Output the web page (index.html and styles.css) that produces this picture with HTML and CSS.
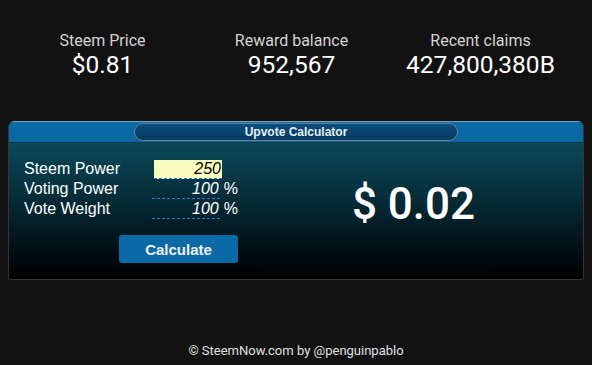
FILE: index.html
```html
<!DOCTYPE html>
<html lang="en">
<head>
    <meta charset="UTF-8">
    <meta name="viewport" content="width=device-width, initial-scale=1.0">
    <title>SteemNow - Upvote Calculator</title>
    <link rel="stylesheet" href="styles.css">
</head>
<body>
    <div class="stats">
        <div class="stat">
            <div class="stat-label">Steem Price</div>
            <div class="stat-value">$0.81</div>
        </div>
        <div class="stat">
            <div class="stat-label">Reward balance</div>
            <div class="stat-value">952,567</div>
        </div>
        <div class="stat">
            <div class="stat-label">Recent claims</div>
            <div class="stat-value">427,800,380B</div>
        </div>
    </div>

    <div class="panel">
        <div class="panel-head">
            <div class="panel-title">Upvote Calculator</div>
        </div>
        <div class="panel-body">
            <div class="calc-form">
                <div class="row">
                    <label for="sp">Steem Power</label>
                    <input id="sp" class="field field-edit" type="text" value="250">
                </div>
                <div class="row">
                    <label for="vp">Voting Power</label>
                    <input id="vp" class="field" type="text" value="100">
                    <span class="unit">%</span>
                </div>
                <div class="row">
                    <label for="vw">Vote Weight</label>
                    <input id="vw" class="field" type="text" value="100">
                    <span class="unit">%</span>
                </div>
                <button id="calcBtn" class="calc-btn">Calculate</button>
            </div>
            <div class="result" id="result">$ 0.02</div>
        </div>
    </div>

    <div class="footer">&copy; SteemNow.com by @penguinpablo</div>
</body>
</html>
```

FILE: styles.css
```css
body {
    margin: 8px;
    background: #121212;
    font-family: Roboto, 'Liberation Sans', sans-serif;
    color: #fff;
}

.stats {
    display: grid;
    grid-template-columns: repeat(3, 189px);
    padding-top: 23px;
    text-align: center;
}

.stat-label {
    font-size: 16px;
    line-height: 19px;
    color: #d4d4d4;
}

.stat-value {
    font-size: 24.5px;
    line-height: 28px;
    margin-top: 1px;
}

.panel {
    width: 574px;
    margin-top: 42px;
    border-radius: 6px 6px 3px 3px;
    overflow: hidden;
    border: 1px solid #363636;
    border-top: none;
}

.panel-head {
    height: 19px;
    padding-top: 1px;
    background: linear-gradient(#0b6ba8, #0a67a2);
    border-top: 1px solid #74a9cd;
    border-bottom: 1px solid #073c5e;
    display: flex;
    justify-content: center;
}

.panel-title {
    width: 322px;
    height: 16px;
    border: 1px solid #6f7f8c;
    border-radius: 9px;
    background: linear-gradient(#0a4d7c, #053961);
    font-family: 'Liberation Sans', Arial, sans-serif;
    font-weight: bold;
    font-size: 12px;
    line-height: 16px;
    text-align: center;
    color: #e8eef2;
}

.panel-body {
    display: grid;
    grid-template-columns: 214px 1fr;
    column-gap: 22px;
    padding: 16px 16px 16px 15px;
    background: linear-gradient(#0b4858 0%, #06303d 35%, #000 100%);
}

.calc-form {
    font-family: 'Liberation Sans', Arial, sans-serif;
}

.row {
    display: flex;
    align-items: center;
    height: 20px;
}

.row label {
    width: 130px;
    font-size: 16px;
}

.field {
    width: 68px;
    height: 19px;
    box-sizing: border-box;
    padding: 0 1px 0 0;
    border: none;
    border-bottom: 1px dashed #1a7fd8;
    background: transparent;
    color: #fff;
    font-family: 'Liberation Sans', Arial, sans-serif;
    font-style: italic;
    font-size: 16px;
    text-align: right;
    outline: none;
}

.field-edit {
    background: #fbfdc0;
    color: #000;
}

.unit {
    margin-left: 4px;
    font-size: 16px;
}

.calc-btn {
    display: block;
    margin: 16px 0 0 95px;
    width: 119px;
    height: 28px;
    border: none;
    border-radius: 3px;
    background: #0b69a6;
    color: #eef2f5;
    font-family: 'Liberation Sans', Arial, sans-serif;
    font-weight: bold;
    font-size: 15px;
    cursor: pointer;
}

.calc-btn:hover {
    background: #0d75b8;
}

.result {
    display: flex;
    align-items: center;
    justify-content: center;
    padding-bottom: 14px;
    font-size: 44px;
    font-weight: 500;
}

.footer {
    margin-top: 63px;
    text-align: center;
    font-size: 13px;
    color: #e0e0e0;
}
```
